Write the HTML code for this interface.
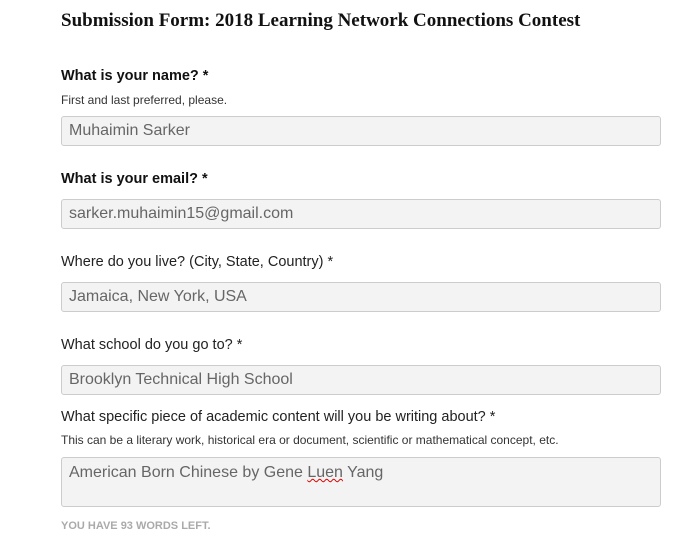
<!DOCTYPE html>
<html><head><style>
body{margin:0;width:686px;height:538px;background:#fff;position:relative;font-family:"Liberation Sans",Arial,sans-serif;overflow:hidden}
.a{position:absolute;white-space:nowrap}
h1{position:absolute;left:61px;top:10px;margin:0;font-family:"Liberation Serif",serif;font-weight:bold;font-size:19px;color:#111}
.l{left:61px;font-size:14.5px;color:#222}
.b{font-weight:bold;color:#111}
.s{left:61px;font-size:12px;color:#333}
.i{position:absolute;left:61px;width:598px;height:28px;border:1px solid #ccc;border-radius:3px;background:#f3f3f3;box-sizing:content-box}
.i span{position:absolute;left:7px;top:5px;font-size:16px;color:#666;white-space:nowrap}
</style></head><body>
<h1>Submission Form: 2018 Learning Network Connections Contest</h1>
<div class="a l b" style="top:68px">What is your name? *</div>
<div class="a s" style="top:93px">First and last preferred, please.</div>
<div class="i" style="top:116px"><span>Muhaimin Sarker</span></div>
<div class="a l b" style="top:171px">What is your email? *</div>
<div class="i" style="top:199px"><span>sarker.muhaimin15@gmail.com</span></div>
<div class="a l" style="top:254px">Where do you live? (City, State, Country) *</div>
<div class="i" style="top:282px"><span>Jamaica, New York, USA</span></div>
<div class="a l" style="top:337px">What school do you go to? *</div>
<div class="i" style="top:365px"><span>Brooklyn Technical High School</span></div>
<div class="a l" style="top:409px">What specific piece of academic content will you be writing about? *</div>
<div class="a s" style="top:433px">This can be a literary work, historical era or document, scientific or mathematical concept, etc.</div>
<div class="i" style="top:457px;height:48px"><span style="top:6px">American Born Chinese by Gene <u style="text-decoration:underline wavy #d00;text-decoration-thickness:1px">Luen</u> Yang</span></div>
<div class="a" style="left:61px;top:520px;font-size:11px;font-weight:bold;color:#aaa">YOU HAVE 93 WORDS LEFT.</div>
</body></html>
